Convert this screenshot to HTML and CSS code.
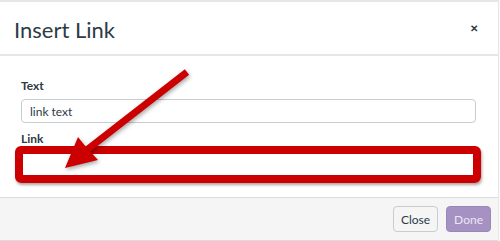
FILE: index.html
```html
<!DOCTYPE html>
<html lang="en">
  <head>
    <meta charset="UTF-8" />
    <title>Insert Link</title>
    <link rel="stylesheet" href="styles.css">
  </head>
  <body>
    <div class="modal">
      <div class="modal-header">
        <div class="heading">Insert Link</div>
        <span class="close-x">&#x2715;</span>
      </div>
      <div class="modal-body">
        <label class="field-label">Text</label>
        <input type="text" class="field-input" value="link text" />
        <label class="field-label link-label">Link</label>
        <input type="text" class="field-input" value="" />
      </div>
      <div class="modal-footer">
        <button class="btn btn-close">Close</button>
        <button class="btn btn-done">Done</button>
      </div>

      <!-- annotation drawn over the dialog -->
      <div class="highlight"></div>
      <svg class="arrow" width="500" height="241" viewBox="0 0 500 241">
        <line x1="187" y1="72" x2="88" y2="149" stroke="#cc0000" stroke-width="7" />
        <polygon points="65,168 78,137 86,147 98,160" fill="#cc0000" />
      </svg>
    </div>
  </body>
</html>
```

FILE: styles.css
```css
body {
  margin: 0;
  font-family: Lato, "Open Sans", sans-serif;
  color: #2d3b45;
  background: #fff;
}
.modal {
  position: relative;
  width: 499px;
  height: 241px;
  border-top: 2px solid #e6e6e6;
  border-right: 1px solid #e6e6e6;
  box-sizing: border-box;
  display: flex;
  flex-direction: column;
}
.modal-header {
  height: 52px;
  display: flex;
  align-items: center;
  justify-content: space-between;
  padding: 0 20px 0 14px;
  border-bottom: 2px solid #e6e6e6;
}
.heading {
  font-size: 22px;
  margin-top: 2px;
}
.close-x {
  font-size: 10px;
  font-weight: bold;
  color: #2d3b45;
}
.modal-body {
  flex: 1;
  display: flex;
  flex-direction: column;
  padding: 22px 22px 0 21px;
}
.field-label {
  font-size: 12px;
  font-weight: bold;
  margin-bottom: 6px;
}
.link-label {
  margin-top: 8px;
}
.field-input {
  height: 24px;
  box-sizing: border-box;
  border: 1px solid #c7cdd1;
  border-radius: 4px;
  padding: 0 8px;
  font-family: Lato, sans-serif;
  font-size: 12px;
  color: #2d3b45;
}
.modal-footer {
  height: 42px;
  background: #f5f5f5;
  border-top: 1px solid #dcdcdc;
  border-bottom: 1px solid #dcdcdc;
  display: flex;
  align-items: center;
  justify-content: flex-end;
  gap: 8px;
  padding-right: 7px;
}
.btn {
  height: 26px;
  border-radius: 4px;
  font-family: Lato, sans-serif;
  font-size: 12px;
  padding: 0 7px;
}
.btn-close {
  background: #f5f5f5;
  border: 1px solid #c7cdd1;
  color: #2d3b45;
}
.btn-done {
  background: #a591c2;
  border: 1px solid #9b86ba;
  color: #ece6f3;
}
.highlight {
  position: absolute;
  left: 15px;
  top: 144px;
  width: 466px;
  height: 37px;
  box-sizing: border-box;
  border: 8px solid #cc0000;
  border-radius: 6px;
  box-shadow: 1px 2px 3px rgba(0, 0, 0, 0.35);
}
.arrow {
  position: absolute;
  left: 0;
  top: -2px;
  filter: drop-shadow(1px 2px 2px rgba(0, 0, 0, 0.35));
}
```
